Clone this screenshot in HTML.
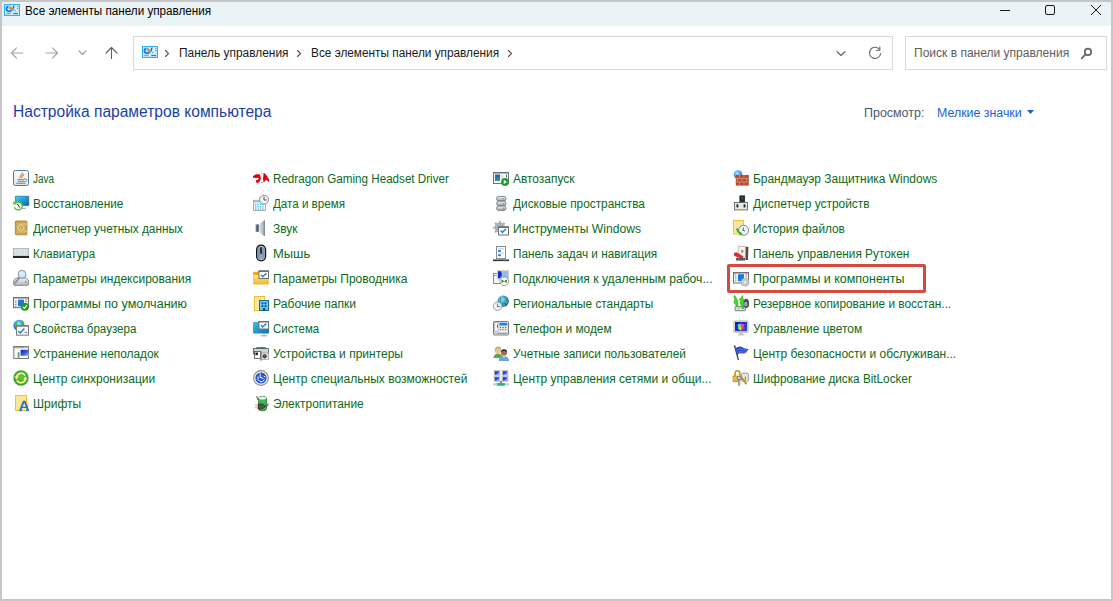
<!DOCTYPE html>
<html><head><meta charset="utf-8"><style>
html,body{margin:0;padding:0;}
body{width:1113px;height:601px;background:#c6c6c6;position:relative;overflow:hidden;font-family:"Liberation Sans",sans-serif;}
#win{position:absolute;left:2px;top:2px;width:1109px;height:597px;background:#fff;overflow:hidden;}
#titlebar{position:absolute;left:2px;top:2px;width:1109px;height:24px;background:#eaf3f6;}
.t{position:absolute;white-space:nowrap;font-size:12px;line-height:16px;transform-origin:0 0;}
.g{color:#0b6a1c;}
.abs{position:absolute;}
svg{position:absolute;overflow:visible;}
</style></head><body>
<div id="win"></div>
<div id="titlebar"></div>
<svg style="left:4px;top:4px" width="16" height="12" viewBox="0 0 16 12"><rect x="0.5" y="0.5" width="15" height="11" fill="#c4e8fa" stroke="#2ab2f2"/><path d="M4.4 2.4 A2.5 2.5 0 1 0 7.4 5.5" stroke="#1a78d8" stroke-width="1.8" fill="none"/><path d="M5.1 2 L5.1 5.1 L8.2 5.1 Q8 2.4 5.1 2 Z" fill="#f28a00"/><path d="M8.4 5.8 Q9 5.8 9.2 4 Q9.4 2.2 10.4 2.2" stroke="#1a4fb0" stroke-width="1.2" fill="none"/><rect x="11.2" y="2" width="2" height="1" fill="#fff"/><rect x="11.2" y="4" width="2" height="1" fill="#fff"/><rect x="11.4" y="6" width="2" height="1" fill="#fff"/><circle cx="13.7" cy="2.5" r="0.6" fill="#1a78d8"/><circle cx="13.7" cy="4.5" r="0.6" fill="#1a78d8"/><circle cx="11" cy="6.5" r="0.6" fill="#1a78d8"/><rect x="2" y="9.1" width="4.8" height="1" fill="#f28a00"/><rect x="7" y="9.1" width="1.6" height="1" fill="#fff"/><rect x="9.2" y="9.1" width="4.8" height="1" fill="#1a6fd0"/></svg>
<span class="t " style="left:24.73px;top:3.00px;transform:scaleX(0.9741);color:#000;">Все элементы панели управления</span>
<svg style="left:0;top:0" width="1113" height="30"><g stroke="#1a1a1a" stroke-width="1" fill="none"><line x1="1000" y1="10.5" x2="1010" y2="10.5"/><rect x="1045.5" y="5.5" width="9" height="9" rx="1.5"/><line x1="1091" y1="5" x2="1101" y2="15"/><line x1="1101" y1="5" x2="1091" y2="15"/></g></svg>
<svg style="left:0;top:0" width="140" height="70"><g fill="none" stroke-width="1.1" stroke-linecap="round" stroke-linejoin="round"><g stroke="#a3a3a3"><path d="M11.5 53 H22.5 M16.5 47.8 L11.5 53 L16.5 58.2"/><path d="M46 53 H57.5 M52.5 47.8 L57.5 53 L52.5 58.2"/></g><path stroke="#9a9a9a" d="M79 51 L82.5 54.5 L86 51"/><path stroke="#606060" d="M111.5 58.5 V47.5 M106 53 L111.5 47.5 L117 53"/></g></svg>
<div class="abs" style="left:133px;top:36px;width:758px;height:32px;border:1px solid #d9d9d9;"></div>
<svg style="left:142px;top:46px" width="16" height="12" viewBox="0 0 16 12"><rect x="0.5" y="0.5" width="15" height="11" fill="#c4e8fa" stroke="#2ab2f2"/><path d="M4.4 2.4 A2.5 2.5 0 1 0 7.4 5.5" stroke="#1a78d8" stroke-width="1.8" fill="none"/><path d="M5.1 2 L5.1 5.1 L8.2 5.1 Q8 2.4 5.1 2 Z" fill="#f28a00"/><path d="M8.4 5.8 Q9 5.8 9.2 4 Q9.4 2.2 10.4 2.2" stroke="#1a4fb0" stroke-width="1.2" fill="none"/><rect x="11.2" y="2" width="2" height="1" fill="#fff"/><rect x="11.2" y="4" width="2" height="1" fill="#fff"/><rect x="11.4" y="6" width="2" height="1" fill="#fff"/><circle cx="13.7" cy="2.5" r="0.6" fill="#1a78d8"/><circle cx="13.7" cy="4.5" r="0.6" fill="#1a78d8"/><circle cx="11" cy="6.5" r="0.6" fill="#1a78d8"/><rect x="2" y="9.1" width="4.8" height="1" fill="#f28a00"/><rect x="7" y="9.1" width="1.6" height="1" fill="#fff"/><rect x="9.2" y="9.1" width="4.8" height="1" fill="#1a6fd0"/></svg>
<svg style="left:0;top:0" width="900" height="70"><g fill="none" stroke="#555" stroke-width="1.1" stroke-linecap="round" stroke-linejoin="round"><path d="M165.5 50.5 L168.5 53.5 L165.5 56.5"/><path d="M297.5 50.5 L300.5 53.5 L297.5 56.5"/><path d="M508.5 50.5 L511.5 53.5 L508.5 56.5"/></g><g fill="none" stroke="#666" stroke-width="1.1" stroke-linecap="round" stroke-linejoin="round"><path d="M837 51.5 L841 55.5 L845 51.5"/><path d="M880.6 53.6 A5.6 5.6 0 1 1 879 48.9"/><path d="M876.3 50.3 H879.8 V46.8"/></g></svg>
<span class="t " style="left:178.88px;top:45.00px;transform:scaleX(0.9935);color:#1a1a1a;">Панель управления</span>
<span class="t " style="left:311.19px;top:45.00px;transform:scaleX(0.9841);color:#1a1a1a;">Все элементы панели управления</span>
<div class="abs" style="left:905px;top:36px;width:200px;height:32px;border:1px solid #d9d9d9;"></div>
<span class="t " style="left:914.18px;top:45.00px;transform:scaleX(1.0019);color:#5d5d5d;">Поиск в панели управления</span>
<svg style="left:0;top:0" width="1113" height="70"><g fill="none" stroke="#666" stroke-width="1.7" stroke-linecap="round"><circle cx="1088" cy="51.9" r="3.2"/><path d="M1085.6 54.4 L1081.6 58.4"/></g></svg>
<span class="t " style="left:13.30px;top:102.00px;transform:scaleX(0.9730);color:#1a3ea8;font-size:16px;line-height:20px;">Настройка параметров компьютера</span>
<span class="t " style="left:863.91px;top:105.00px;transform:scaleX(1.0382);color:#4e566b;">Просмотр:</span>
<span class="t " style="left:936.60px;top:105.00px;transform:scaleX(1.0308);color:#1a5fd6;">Мелкие значки</span>
<svg style="left:0;top:0" width="1113" height="130"><path d="M1027 110 H1034 L1030.5 114 Z" fill="#1a5fd6"/></svg>
<svg style="left:13px;top:170px" width="16" height="16" viewBox="0 0 16 16"><defs><linearGradient id="jg" x1="0" y1="0" x2="0" y2="1"><stop offset="0" stop-color="#fdfdfd"/><stop offset="1" stop-color="#e2e5e8"/></linearGradient></defs><rect x="0.5" y="0.5" width="15" height="15" rx="2" fill="url(#jg)" stroke="#56789a"/><path d="M7 8.2 C5.6 6.6 8.8 5.4 9.6 2.6 M8.6 8.2 C7.8 6.6 10.6 6 10.8 4" stroke="#ea7418" stroke-width="1.1" fill="none"/><path d="M4.3 9.6 H11.7 M5 11.4 H11 M3.2 13.3 H12.4" stroke="#5a7ca0" stroke-width="0.9" fill="none"/><path d="M11.6 8.6 Q14 9.2 13.6 10.6 Q13.2 11.8 11.2 11.8" stroke="#5a7ca0" stroke-width="0.9" fill="none"/></svg>
<span class="t g" style="left:32.93px;top:171.00px;transform:scaleX(0.8299);">Java</span>
<svg style="left:13px;top:195px" width="16" height="16" viewBox="0 0 16 16"><defs><linearGradient id="mg1" x1="0" y1="0" x2="1" y2="1"><stop offset="0" stop-color="#36d8f0"/><stop offset="1" stop-color="#0e62b4"/></linearGradient></defs><rect x="2.3" y="1.2" width="13.5" height="9.4" rx="0.6" fill="url(#mg1)" stroke="#17548c" stroke-width="0.6"/><path d="M9.3 13.3 H12.8" stroke="#8a949e" stroke-width="1"/><circle cx="5.2" cy="11" r="4" fill="#fff"/><path d="M2.6 8 A4 4 0 1 1 1.4 12.2" stroke="#52c032" stroke-width="1.4" fill="none"/><path d="M0.2 6 L0.4 9.8 L3.8 9.2 Z" fill="#52c032"/><path d="M4.2 8.8 L6.8 12.6" stroke="#222" stroke-width="1" fill="none"/></svg>
<span class="t g" style="left:33.19px;top:196.00px;transform:scaleX(0.9839);">Восстановление</span>
<svg style="left:13px;top:220px" width="16" height="16" viewBox="0 0 16 16"><rect x="2.3" y="1" width="11.6" height="13.8" rx="0.8" fill="#c7a045" stroke="#a4802c" stroke-width="0.8"/><rect x="3.8" y="2.6" width="8.6" height="10.6" fill="#d9b45a"/><circle cx="7.8" cy="7.6" r="2.6" fill="#b99448" stroke="#f0e0b8" stroke-width="1"/><circle cx="7.8" cy="7.6" r="0.9" fill="#e8dcc8"/><rect x="12.5" y="3.4" width="0.9" height="1.4" fill="#eee"/><rect x="12.5" y="10.4" width="0.9" height="1.4" fill="#eee"/></svg>
<span class="t g" style="left:33.28px;top:221.00px;transform:scaleX(0.9845);">Диспетчер учетных данных</span>
<svg style="left:13px;top:245px" width="16" height="16" viewBox="0 0 16 16"><rect x="0.3" y="3.3" width="15.4" height="9" fill="#c9d0d8" stroke="#9aa4ae" stroke-width="0.6"/><path d="M1.5 5 H14.5 M1.5 7 H14.5 M2 9 H14" stroke="#fff" stroke-width="1.1" stroke-dasharray="1.2 0.6"/><rect x="0" y="11" width="16" height="2" fill="#1d2328"/></svg>
<span class="t g" style="left:33.28px;top:246.00px;transform:scaleX(0.9540);">Клавиатура</span>
<svg style="left:13px;top:270px" width="16" height="16" viewBox="0 0 16 16"><defs><linearGradient id="dg" x1="0" y1="0" x2="0" y2="1"><stop offset="0" stop-color="#f2f2f4"/><stop offset="1" stop-color="#b4b7be"/></linearGradient></defs><path d="M1 10 L3 8 H13 L15.5 10 V14 Q15.5 15.4 14 15.4 H2 Q0.5 15.4 0.5 14 Z" fill="url(#dg)" stroke="#74777e" stroke-width="0.8"/><rect x="12.3" y="10.8" width="1.1" height="2.6" fill="#30c030"/><path d="M6.6 7.6 L1.6 13.4" stroke="#6a6d74" stroke-width="1.6"/><path d="M6.6 7.6 L1.6 13.4" stroke="#e8e8e8" stroke-width="0.5"/><circle cx="9" cy="4.3" r="3.9" fill="#d4eafa" stroke="#8a949e" stroke-width="1"/><path d="M7 3.5 Q8 2 10 2.4" stroke="#fff" stroke-width="0.8" fill="none"/></svg>
<span class="t g" style="left:32.59px;top:271.00px;transform:scaleX(0.9980);">Параметры индексирования</span>
<svg style="left:13px;top:295px" width="16" height="16" viewBox="0 0 16 16"><rect x="0.5" y="2.5" width="15" height="10.2" fill="#fdfdfd" stroke="#707070"/><rect x="0" y="2" width="16" height="1.5" fill="#707070"/><rect x="5" y="4.6" width="6" height="6.8" fill="#1a78d8"/><path d="M1.8 5.9 H3.6 M1.8 7.7 H3.6 M1.8 9.6 H3.6 M1.8 11.4 H3.6 M12.2 4.8 H14.2 M12.2 6.6 H14.2" stroke="#7a7a7a" stroke-width="0.9"/><circle cx="11.8" cy="11.8" r="4" fill="#23982a"/><path d="M9.8 11.8 L11.4 13.4 L14.0 10.200000000000001" stroke="#fff" stroke-width="1.2" fill="none"/></svg>
<span class="t g" style="left:33.07px;top:296.00px;transform:scaleX(1.0463);">Программы по умолчанию</span>
<svg style="left:13px;top:320px" width="16" height="16" viewBox="0 0 16 16"><defs><radialGradient id="gl1" cx="0.45" cy="0.35" r="0.7"><stop offset="0" stop-color="#a8f0ff"/><stop offset="0.55" stop-color="#2a8ee0"/><stop offset="1" stop-color="#1a4aa8"/></radialGradient></defs><circle cx="6" cy="5.4" r="5.6" fill="url(#gl1)"/><path d="M2.6 2 Q4.6 3.6 3.2 6.2 M8.6 0.8 Q11 2.4 9.6 4.6" stroke="#3cc040" stroke-width="1.6" fill="none"/><rect x="3.5" y="5.7" width="12" height="9.5" fill="#f6f6f6" stroke="#7c7c7c"/><rect x="3" y="5.2" width="13" height="1.5" fill="#7c7c7c"/><path d="M5.2 11.2 L7.3 13 L11.3 8.5" stroke="#1f80d8" stroke-width="1.5" fill="none"/><path d="M11.8 12.6 H14" stroke="#666" stroke-width="0.9"/></svg>
<span class="t g" style="left:32.78px;top:321.00px;transform:scaleX(0.9611);">Свойства браузера</span>
<svg style="left:13px;top:345px" width="16" height="16" viewBox="0 0 16 16"><rect x="0.8" y="1.6" width="14.7" height="11.9" fill="#fbfbfb" stroke="#787878"/><rect x="0.3" y="1.1" width="15.7" height="1.5" fill="#787878"/><path d="M11 2.2 H15" stroke="#eee" stroke-width="0.6" stroke-dasharray="1 0.5"/><defs><linearGradient id="tb" x1="0" y1="0" x2="1" y2="1"><stop offset="0" stop-color="#0a1ac0"/><stop offset="0.6" stop-color="#3a6ae8"/><stop offset="1" stop-color="#a8c8f8"/></linearGradient></defs><rect x="7.6" y="4.8" width="8" height="6" fill="url(#tb)"/><rect x="4.7" y="7.4" width="1.8" height="5.4" fill="#8a8a8a"/><rect x="4.7" y="7.6" width="1.8" height="1.6" fill="#40d040"/><rect x="2" y="3.4" width="11" height="0.7" fill="#d0d0d0"/></svg>
<span class="t g" style="left:32.78px;top:346.00px;transform:scaleX(0.9894);">Устранение неполадок</span>
<svg style="left:13px;top:370px" width="16" height="16" viewBox="0 0 16 16"><defs><radialGradient id="sc" cx="0.5" cy="0.45" r="0.6"><stop offset="0" stop-color="#6ac848"/><stop offset="1" stop-color="#2a9a2e"/></radialGradient></defs><circle cx="8" cy="8" r="7.7" fill="url(#sc)"/><path d="M3.6 7.2 A4.6 4.6 0 0 1 12.2 5.6" stroke="#f4f08a" stroke-width="1.8" fill="none"/><path d="M12.4 8.8 A4.6 4.6 0 0 1 3.8 10.4" stroke="#f4f08a" stroke-width="1.8" fill="none"/><path d="M1.4 6.6 L5.8 6.6 L3.6 9.8 Z M14.6 9.4 L10.2 9.4 L12.4 6.2 Z" fill="#f4f08a"/></svg>
<span class="t g" style="left:32.56px;top:371.00px;transform:scaleX(1.0001);">Центр синхронизации</span>
<svg style="left:13px;top:395px" width="16" height="16" viewBox="0 0 16 16"><rect x="2.5" y="0.5" width="11" height="15" fill="#fde49c" stroke="#f2c232"/><rect x="13" y="8" width="2" height="4" fill="#fde49c" stroke="#f2c232" stroke-width="0.6"/><path d="M7.2 15.4 L10.6 6.6 H11.8 L15.2 15.4" stroke="#1a6fd0" stroke-width="1.8" fill="none"/><path d="M8.6 12.4 H13.6" stroke="#1a6fd0" stroke-width="1.2"/><path d="M6 15.6 H9.4 M13 15.6 H16" stroke="#1a6fd0" stroke-width="1"/></svg>
<span class="t g" style="left:33.18px;top:396.00px;transform:scaleX(1.0014);">Шрифты</span>
<svg style="left:253px;top:170px" width="16" height="16" viewBox="0 0 16 16"><path d="M0 6.1 L2 4.9 L3.3 4 L4.4 4.7 L5.7 4 L7 4.7 L7.6 6.7 L7.9 8.8 L6.8 11.2 L5.5 12.8 L3.1 12.8 L3.1 10.1 L4.4 9.9 L6 8.5 L4.7 7.7 L3.3 8 L0.1 7.7 Z" fill="#e2000f"/><path d="M10.3 3.2 L11.8 3.2 L14 5.9 L15 8 L16 9.1 L16 11.7 L15 11.7 L14 10.1 L12.9 10.1 L11.6 11.7 L10.3 11.7 L10 8 L10.5 5.3 Z" fill="#e2000f"/><rect x="8.1" y="12.2" width="1.6" height="0.7" fill="#e2000f"/><circle cx="8.4" cy="3.4" r="0.6" fill="#f2a0a8"/></svg>
<span class="t g" style="left:273.20px;top:171.00px;transform:scaleX(0.9693);">Redragon Gaming Headset Driver</span>
<svg style="left:253px;top:195px" width="16" height="16" viewBox="0 0 16 16"><rect x="0.5" y="5.3" width="11.8" height="10.2" fill="#f8fbfc" stroke="#8e9aa2" stroke-width="0.8"/><rect x="0.9" y="5.7" width="11" height="1.8" fill="#8ad0e2"/><rect x="2.0" y="8.9" width="1.3" height="1.3" fill="#3aaed0"/><rect x="4.4" y="8.9" width="1.3" height="1.3" fill="#3aaed0"/><rect x="6.8" y="8.9" width="1.3" height="1.3" fill="#3aaed0"/><rect x="9.2" y="8.9" width="1.3" height="1.3" fill="#3aaed0"/><rect x="2.0" y="11.2" width="1.3" height="1.3" fill="#3aaed0"/><rect x="4.4" y="11.2" width="1.3" height="1.3" fill="#3aaed0"/><rect x="6.8" y="11.2" width="1.3" height="1.3" fill="#3aaed0"/><rect x="9.2" y="11.2" width="1.3" height="1.3" fill="#3aaed0"/><rect x="2.0" y="13.4" width="1.3" height="1.3" fill="#3aaed0"/><rect x="4.4" y="13.4" width="1.3" height="1.3" fill="#3aaed0"/><rect x="6.8" y="13.4" width="1.3" height="1.3" fill="#3aaed0"/><rect x="9.2" y="13.4" width="1.3" height="1.3" fill="#3aaed0"/><circle cx="11" cy="4.7" r="4.5" fill="#eef2f4" stroke="#7d8890" stroke-width="0.9"/><path d="M11 1.6 V5 H13.6" stroke="#34404c" stroke-width="0.9" fill="none"/></svg>
<span class="t g" style="left:273.28px;top:196.00px;transform:scaleX(0.9664);">Дата и время</span>
<svg style="left:253px;top:220px" width="16" height="16" viewBox="0 0 16 16"><defs><linearGradient id="spk" x1="0" y1="0" x2="1" y2="0"><stop offset="0" stop-color="#e6e8ea"/><stop offset="0.6" stop-color="#b8bcc0"/><stop offset="1" stop-color="#7d838a"/></linearGradient><linearGradient id="spr" x1="0" y1="0" x2="1" y2="0"><stop offset="0" stop-color="#8a96a2"/><stop offset="0.5" stop-color="#4e5a66"/><stop offset="1" stop-color="#7a8692"/></linearGradient></defs><rect x="2.6" y="4.4" width="3.4" height="7.4" fill="url(#spr)"/><path d="M6 4.4 L11 0.2 H12 V16 H11 L6 11.8 Z" fill="url(#spk)"/></svg>
<span class="t g" style="left:272.67px;top:221.00px;transform:scaleX(0.9958);">Звук</span>
<svg style="left:253px;top:245px" width="16" height="16" viewBox="0 0 16 16"><defs><linearGradient id="ms" x1="0" y1="0" x2="1" y2="0"><stop offset="0" stop-color="#5d748c"/><stop offset="0.5" stop-color="#9cb0c4"/><stop offset="1" stop-color="#60788e"/></linearGradient></defs><rect x="3.6" y="0.2" width="9" height="15.6" rx="4.5" fill="url(#ms)" stroke="#0c0f12" stroke-width="1.2"/><rect x="4.6" y="1.2" width="7" height="13.6" rx="3.5" fill="none" stroke="#dfe6ec" stroke-width="0.5" opacity="0.7"/><rect x="7.1" y="2.3" width="1.9" height="6.5" fill="#26292e"/></svg>
<span class="t g" style="left:272.94px;top:246.00px;transform:scaleX(1.0774);">Мышь</span>
<svg style="left:253px;top:270px" width="16" height="16" viewBox="0 0 16 16"><defs><linearGradient id="fo" x1="0" y1="0" x2="0" y2="1"><stop offset="0" stop-color="#ffe48a"/><stop offset="1" stop-color="#f2b62a"/></linearGradient></defs><path d="M0 3.4 Q0 1.8 1.6 1.8 H6.4 L7.2 3.6 H14 V6 H0 Z" fill="#f0a808"/><rect x="0" y="4.8" width="16" height="9.8" rx="1" fill="url(#fo)"/><rect x="6.0" y="1.0" width="9.5" height="7.5" fill="#fff" stroke="#6e6e6e"/><rect x="5.5" y="0.5" width="10.5" height="1.5" fill="#6e6e6e"/><path d="M8 5 L9.7 6.8 L13.4 3.4" stroke="#1f86e0" stroke-width="1.5" fill="none"/></svg>
<span class="t g" style="left:273.18px;top:271.00px;transform:scaleX(0.9996);">Параметры Проводника</span>
<svg style="left:253px;top:295px" width="16" height="16" viewBox="0 0 16 16"><rect x="1.5" y="1.5" width="10" height="14" fill="#fde59e" stroke="#f0c030"/><rect x="6.5" y="5.5" width="9" height="10" fill="#66cdf3" stroke="#1a6aa0"/><rect x="8.6" y="7.4" width="1.8" height="1.8" fill="#144a72"/><rect x="11.6" y="7.4" width="1.8" height="1.8" fill="#144a72"/><rect x="8.6" y="10.2" width="1.8" height="1.8" fill="#144a72"/><rect x="11.6" y="10.2" width="1.8" height="1.8" fill="#144a72"/><rect x="9.8" y="13" width="2.6" height="2.6" fill="#144a72"/></svg>
<span class="t g" style="left:273.11px;top:296.00px;transform:scaleX(1.0123);">Рабочие папки</span>
<svg style="left:253px;top:320px" width="16" height="16" viewBox="0 0 16 16"><defs><linearGradient id="sy" x1="0" y1="0" x2="1" y2="1"><stop offset="0" stop-color="#37c4e8"/><stop offset="1" stop-color="#0b6cb4"/></linearGradient></defs><rect x="0" y="2" width="16" height="11.5" rx="1" fill="url(#sy)"/><path d="M11 13.5 V15.5 M7.5 15.8 H14" stroke="#9aa6b0" stroke-width="1"/><rect x="6.0" y="1.5" width="9.5" height="7.5" fill="#fff" stroke="#6e6e6e"/><rect x="5.5" y="1" width="10.5" height="1.5" fill="#6e6e6e"/><path d="M8 5.2 L9.6 7 L13.3 3.6" stroke="#1f86e0" stroke-width="1.5" fill="none"/></svg>
<span class="t g" style="left:272.77px;top:321.00px;transform:scaleX(0.9551);">Система</span>
<svg style="left:253px;top:345px" width="16" height="16" viewBox="0 0 16 16"><rect x="3" y="2" width="10" height="2.5" rx="1" fill="#2a8ae8"/><rect x="7" y="2" width="2" height="2.5" fill="#28b048"/><rect x="0.5" y="3.5" width="15" height="5.5" fill="#d0d3d6" stroke="#444" stroke-width="0.7"/><rect x="1.5" y="6.5" width="6" height="7" fill="#fff" stroke="#333" stroke-width="0.7"/><rect x="2.4" y="7.5" width="2.6" height="2.6" fill="#222"/><rect x="7.2" y="6.5" width="1.6" height="9" fill="#707070"/><rect x="8.5" y="8" width="7" height="6.5" fill="#e2e4e6" stroke="#9a9ea4" stroke-width="0.7"/><circle cx="11.6" cy="11.3" r="2" fill="#333" stroke="#777" stroke-width="0.5"/><circle cx="11.3" cy="11" r="0.7" fill="#48a0c0"/></svg>
<span class="t g" style="left:272.79px;top:346.00px;transform:scaleX(0.9998);">Устройства и принтеры</span>
<svg style="left:253px;top:370px" width="16" height="16" viewBox="0 0 16 16"><circle cx="8" cy="8" r="7.4" fill="#f2f2f2" stroke="#8c8c8c" stroke-width="1.1"/><circle cx="8" cy="8" r="5.6" fill="#2656c8"/><path d="M7.2 3.5 V7.4 L10.5 8.6 M5 6.5 Q4 10 7 11.6 Q10 12.6 11.5 9.5 M10.8 6.3 L12.3 7" stroke="#fff" stroke-width="1" fill="none"/></svg>
<span class="t g" style="left:273.12px;top:371.00px;transform:scaleX(1.0016);">Центр специальных возможностей</span>
<svg style="left:253px;top:395px" width="16" height="16" viewBox="0 0 16 16"><path d="M5.5 3.5 Q5.5 1.3 9.5 1.3 Q13.5 1.3 13.5 3.5 V14 Q13.5 15.8 9.5 15.8 Q5.5 15.8 5.5 14 Z" fill="#3cb84a" stroke="#1e6e2a" stroke-width="0.7"/><ellipse cx="9.5" cy="3" rx="3.6" ry="1.5" fill="#f0f4f0"/><path d="M15 8.5 Q16 11 12 11.5" stroke="#222" stroke-width="0.8" fill="none"/><path d="M4 1 Q3.5 3 5.2 5" stroke="#333" stroke-width="0.8" fill="none"/><path d="M5 9 H9 L11.5 10.5 V12.5 L9 14 H5 Z" fill="#505458" stroke="#222" stroke-width="0.6"/><rect x="2" y="9.6" width="3" height="1.1" fill="#e8b820"/><rect x="2" y="12.2" width="3" height="1.1" fill="#e8b820"/></svg>
<span class="t g" style="left:273.07px;top:396.00px;transform:scaleX(0.9928);">Электропитание</span>
<svg style="left:493px;top:170px" width="16" height="16" viewBox="0 0 16 16"><rect x="0.5" y="2.5" width="15" height="11" fill="#fcfcfc" stroke="#747474"/><rect x="0" y="2" width="16" height="1.5" fill="#747474"/><defs><linearGradient id="az" x1="0" y1="0" x2="0" y2="1"><stop offset="0" stop-color="#1a5cb0"/><stop offset="1" stop-color="#3a9a8a"/></linearGradient></defs><rect x="2" y="4.5" width="5" height="6.5" fill="url(#az)"/><path d="M8.3 6 H10.5 M8.3 8 H10" stroke="#aaa" stroke-width="0.8"/><rect x="13" y="4.5" width="1" height="3" fill="#2a6ac0"/><circle cx="12" cy="12" r="3.9" fill="#2a9a30"/><path d="M10.8 10 L14 12 L10.8 14 Z" fill="#fff"/></svg>
<span class="t g" style="left:513.00px;top:171.00px;transform:scaleX(0.9931);">Автозапуск</span>
<svg style="left:493px;top:195px" width="16" height="16" viewBox="0 0 16 16"><defs><linearGradient id="dsk" x1="0" y1="0" x2="0" y2="1"><stop offset="0" stop-color="#f4f4f6"/><stop offset="1" stop-color="#9ea2a8"/></linearGradient></defs><rect x="3.6" y="1.4" width="9.4" height="4.4" rx="2" fill="url(#dsk)" stroke="#6a6e74" stroke-width="0.8"/><rect x="3.6" y="6.2" width="9.4" height="4.4" rx="2" fill="url(#dsk)" stroke="#6a6e74" stroke-width="0.8"/><rect x="3.6" y="11" width="9.4" height="4.4" rx="2" fill="url(#dsk)" stroke="#6a6e74" stroke-width="0.8"/><rect x="9.8" y="3.2" width="1.2" height="1" fill="#2ad02a"/><rect x="9.8" y="8" width="1.2" height="1" fill="#2ad02a"/><rect x="9.8" y="12.8" width="1.2" height="1" fill="#2ad02a"/></svg>
<span class="t g" style="left:513.28px;top:196.00px;transform:scaleX(0.9872);">Дисковые пространства</span>
<svg style="left:493px;top:220px" width="16" height="16" viewBox="0 0 16 16"><path d="M6 0.8 L7.6 0.8 L8 2.6 L9.6 3.3 L11 2.2 L12.2 3.4 L11.2 4.9 L11.8 6.4 L13.5 6.8 V8.4 L11.8 8.8 L11.2 10.3 L12.2 11.7 L11 12.9 L9.6 11.9 L8 12.6 L7.6 14.3 H6 L5.6 12.6 L4 11.9 L2.6 12.9 L1.4 11.7 L2.4 10.3 L1.8 8.8 L0.1 8.4 V6.8 L1.8 6.4 L2.4 4.9 L1.4 3.4 L2.6 2.2 L4 3.3 L5.6 2.6 Z" fill="#a7b1bc"/><rect x="5.5" y="7.0" width="10" height="8.0" fill="#fff" stroke="#6e6e6e"/><rect x="5" y="6.5" width="11" height="1.5" fill="#6e6e6e"/><path d="M7.6 10.6 L9.3 12.4 L13 9" stroke="#1f86e0" stroke-width="1.5" fill="none"/></svg>
<span class="t g" style="left:513.11px;top:221.00px;transform:scaleX(1.0089);">Инструменты Windows</span>
<svg style="left:493px;top:245px" width="16" height="16" viewBox="0 0 16 16"><rect x="3.5" y="1.5" width="9" height="12" fill="#fff" stroke="#8a8a8a"/><path d="M5 3.8 H11 M5 8 H11" stroke="#bbb" stroke-width="0.8"/><rect x="5" y="5" width="3" height="1.8" fill="#1a82e0"/><rect x="5" y="9.4" width="3" height="1.8" fill="#1a82e0"/><rect x="0" y="14.5" width="16" height="1.6" fill="#2a2e33"/><path d="M10 15.3 H16" stroke="#888" stroke-width="0.6" stroke-dasharray="0.6 0.6"/></svg>
<span class="t g" style="left:513.19px;top:246.00px;transform:scaleX(0.9795);">Панель задач и навигация</span>
<svg style="left:493px;top:270px" width="16" height="16" viewBox="0 0 16 16"><rect x="0.5" y="3.5" width="7" height="10" fill="#f8f8f8" stroke="#8a8a8a"/><rect x="1" y="5" width="6" height="0.8" fill="#7a9ad0"/><rect x="4" y="0" width="12" height="9.5" fill="#d8d4cc"/><rect x="5" y="1.3" width="10" height="7" fill="#98b8f0"/><path d="M5 1.3 H8 L9 5 L7 8.3 H5 Z" fill="#1030c0"/><circle cx="11.2" cy="11.3" r="4.4" fill="#fff" stroke="#8a8a8a" stroke-width="0.8"/><path d="M8.4 10 L10.2 11.3 L8.4 12.6 M14 10 L12.2 11.3 L14 12.6" stroke="#1a8a1a" stroke-width="1.2" fill="none"/></svg>
<span class="t g" style="left:513.13px;top:271.00px;transform:scaleX(1.0123);">Подключения к удаленным рабоч...</span>
<svg style="left:493px;top:295px" width="16" height="16" viewBox="0 0 16 16"><defs><radialGradient id="gl2" cx="0.4" cy="0.35" r="0.7"><stop offset="0" stop-color="#9ee8ff"/><stop offset="0.6" stop-color="#2a86d8"/><stop offset="1" stop-color="#1a3fa8"/></radialGradient></defs><circle cx="10.2" cy="6.2" r="5.6" fill="url(#gl2)"/><path d="M7 2.8 Q8.5 4.5 7.5 6.5 M12.5 5 Q14.5 6 13.5 8.5 M9.5 9.5 Q11 10.5 12.5 10.2" stroke="#38c040" stroke-width="1.5" fill="none"/><circle cx="4.6" cy="11.2" r="4.3" fill="#eef2f4" stroke="#8d979e" stroke-width="0.9"/><path d="M4.6 8.6 V11.6 H7" stroke="#5a6a78" stroke-width="0.9" fill="none"/></svg>
<span class="t g" style="left:513.19px;top:296.00px;transform:scaleX(0.9841);">Региональные стандарты</span>
<svg style="left:493px;top:320px" width="16" height="16" viewBox="0 0 16 16"><rect x="0.5" y="1.5" width="15" height="13.5" rx="1" fill="#e4e6ea" stroke="#6a6e74" stroke-width="0.9"/><rect x="1.5" y="2.5" width="3.5" height="9" fill="#fafafa" stroke="#888" stroke-width="0.5"/><rect x="4" y="5" width="0.6" height="2.5" fill="#222"/><rect x="6.3" y="2.8" width="8" height="2.6" rx="0.6" fill="#1a84e0"/><path d="M6.8 7.5 H14 M6.8 9.6 H14" stroke="#555" stroke-width="0.9" stroke-dasharray="1.2 1.4"/><rect x="1" y="12.6" width="14" height="1.8" fill="#bcc0c6"/><path d="M5 13.5 H13" stroke="#1a84e0" stroke-width="1" stroke-dasharray="0.9 0.9"/></svg>
<span class="t g" style="left:513.23px;top:321.00px;transform:scaleX(0.9889);">Телефон и модем</span>
<svg style="left:493px;top:345px" width="16" height="16" viewBox="0 0 16 16"><path d="M0.4 13 Q0.6 9.2 5 8.6 Q9.4 9.2 9.6 13 Z" fill="#5aa848"/><circle cx="5" cy="5.6" r="3.2" fill="#e8c49a"/><path d="M1.8 5.6 Q1.8 1.6 5 1.6 Q8.4 1.6 8.4 5 Q7 3.4 4 3.6 Q3 5 2.5 7 Z" fill="#c8b070"/><path d="M5.8 16 Q6 11.6 11 11 Q15.8 11.6 16 16 Z" fill="#6aa4d8"/><path d="M10 11.4 L11 13 L12 11.4 Z" fill="#fff"/><circle cx="11" cy="7.8" r="3" fill="#a86e44"/><path d="M8 7.5 Q8 4.2 11 4.2 Q14 4.2 14 7.5 Q13 5.8 11 6 Q9 5.8 8 7.5 Z" fill="#2a2a2a"/></svg>
<span class="t g" style="left:512.78px;top:346.00px;transform:scaleX(0.9872);">Учетные записи пользователей</span>
<svg style="left:493px;top:370px" width="16" height="16" viewBox="0 0 16 16"><defs><linearGradient id="nm" x1="0" y1="0" x2="1" y2="1"><stop offset="0" stop-color="#0a1ab8"/><stop offset="0.5" stop-color="#2a4ae8"/><stop offset="1" stop-color="#b8d0ff"/></linearGradient></defs><rect x="1" y="0.5" width="6" height="5" fill="#c4c8cc" stroke="#9ca2a8" stroke-width="0.4"/><rect x="1.9" y="1.3" width="4.2" height="3.4" fill="url(#nm)"/><rect x="9" y="0.5" width="6" height="5" fill="#c4c8cc" stroke="#9ca2a8" stroke-width="0.4"/><rect x="9.9" y="1.3" width="4.2" height="3.4" fill="url(#nm)"/><rect x="1" y="6.5" width="6" height="5" fill="#c4c8cc" stroke="#9ca2a8" stroke-width="0.4"/><rect x="1.9" y="7.3" width="4.2" height="3.4" fill="url(#nm)"/><rect x="9" y="6.5" width="6" height="5" fill="#c4c8cc" stroke="#9ca2a8" stroke-width="0.4"/><rect x="9.9" y="7.3" width="4.2" height="3.4" fill="url(#nm)"/><rect x="0" y="13.2" width="16" height="2.2" fill="#c8ccd0"/><path d="M7 11 H9 V13 H11.8 V15.8 H4.2 V13 H7 Z" fill="#1ec070"/></svg>
<span class="t g" style="left:513.15px;top:371.00px;transform:scaleX(0.9966);">Центр управления сетями и общи...</span>
<svg style="left:733px;top:170px" width="16" height="16" viewBox="0 0 16 16"><defs><radialGradient id="fg" cx="0.4" cy="0.35" r="0.7"><stop offset="0" stop-color="#b0e4fa"/><stop offset="0.7" stop-color="#3c8ad0"/><stop offset="1" stop-color="#2a6ab8"/></radialGradient></defs><circle cx="5" cy="4.6" r="4.3" fill="url(#fg)"/><rect x="2.8" y="5" width="13" height="10.6" fill="#b9492e"/><path d="M2.8 8.5 H15.8 M2.8 12 H15.8 M6.5 5 V8.5 M11 5 V8.5 M4.5 8.5 V12 M9 8.5 V12 M13.5 8.5 V12 M6.5 12 V15.6 M11 12 V15.6" stroke="#e2aa92" stroke-width="0.6"/></svg>
<span class="t g" style="left:753.18px;top:171.00px;transform:scaleX(0.9950);">Брандмауэр Защитника Windows</span>
<svg style="left:733px;top:195px" width="16" height="16" viewBox="0 0 16 16"><rect x="6.8" y="0.8" width="5" height="6.8" fill="#2a2e33" stroke="#111" stroke-width="0.5"/><rect x="8.8" y="2.5" width="1" height="1" fill="#30e040"/><rect x="1.5" y="7.5" width="13" height="7.4" fill="#e6e8ea" stroke="#666" stroke-width="0.9"/><rect x="3.5" y="9.4" width="1.8" height="3" fill="#1a1a1a"/><rect x="10.6" y="9.4" width="1.8" height="3" fill="#1a1a1a"/></svg>
<span class="t g" style="left:753.28px;top:196.00px;transform:scaleX(0.9941);">Диспетчер устройств</span>
<svg style="left:733px;top:220px" width="16" height="16" viewBox="0 0 16 16"><rect x="0.5" y="0.5" width="10" height="13.5" fill="#fde59e" stroke="#f0c030"/><circle cx="10.6" cy="10.3" r="5" fill="#f2f4f6" stroke="#7a848c" stroke-width="1"/><path d="M10.6 7.5 L9.8 10.3 L12 11" stroke="#333" stroke-width="0.8" fill="none"/><path d="M3 8.5 Q3.5 12.5 7 13.8 L5.6 15 L9.6 15.2 L8 11.8 L7.6 12.6 Q5 11 5.2 8.5 Z" fill="#2ab02a"/></svg>
<span class="t g" style="left:753.19px;top:221.00px;transform:scaleX(0.9846);">История файлов</span>
<svg style="left:733px;top:245px" width="16" height="16" viewBox="0 0 16 16"><rect x="5" y="1.5" width="10" height="12" fill="#f4f4f4" stroke="#9a9a9a" stroke-width="0.6" transform="rotate(5 10 8)"/><rect x="12.5" y="2" width="2.5" height="13" fill="#5a4a4a"/><rect x="8" y="5" width="2.4" height="2.6" fill="#d08a30"/><path d="M0.8 9 Q1.5 6.5 4 7.5 L10.5 11.5 L9.5 13.8 L2.5 11.6 Q0.5 10.8 0.8 9 Z" fill="#e02a3a"/><rect x="3" y="13" width="9" height="2.6" fill="#3a3a3a" opacity="0.8"/></svg>
<span class="t g" style="left:753.19px;top:246.00px;transform:scaleX(0.9871);">Панель управления Рутокен</span>
<svg style="left:733px;top:270px" width="16" height="16" viewBox="0 0 16 16"><rect x="0.5" y="2.5" width="15" height="10.5" fill="#fdfdfd" stroke="#707070"/><rect x="0" y="2" width="16" height="1.5" fill="#707070"/><rect x="5" y="4.2" width="6" height="7" fill="#1a78d8"/><path d="M1.8 4.8 H3.4 M1.8 6.8 H3.4 M1.8 8.8 H3.4 M1.8 10.8 H3.4 M12.4 4.8 H14.2 M12.4 6.8 H14.2" stroke="#777" stroke-width="0.9"/><circle cx="12" cy="12.2" r="4" fill="#c8ccd0" stroke="#9aa0a6" stroke-width="0.6"/><circle cx="12" cy="12.2" r="1" fill="#fff"/></svg>
<span class="t g" style="left:753.08px;top:271.00px;transform:scaleX(1.0388);">Программы и компоненты</span>
<svg style="left:733px;top:295px" width="16" height="16" viewBox="0 0 16 16"><path d="M2.2 11.6 H11.8 Q12.4 11.6 12.4 12.4 V15 Q12.4 15.7 11.6 15.7 H2.6 Q2 15.7 2 15 V12.4 Q2 11.6 2.2 11.6 Z" fill="#e4e6ea" stroke="#5a5e66" stroke-width="0.8"/><rect x="4.5" y="13.2" width="2.2" height="0.8" fill="#8a8e96"/><ellipse cx="13.2" cy="8.4" rx="2.8" ry="4.6" fill="#4a4a52"/><ellipse cx="12.8" cy="9" rx="1.6" ry="2.6" fill="#a0a8d8"/><path d="M12 9.6 L14.4 10.4" stroke="#f08050" stroke-width="1"/><path d="M1.3 0.4 Q3 1.4 3.6 4 Q5.6 5.4 4.8 7.6 Q5.6 9.6 4.4 11.4 L3.2 11.6 Q3.4 9.4 1.6 8.6 Q0.2 7.4 1.4 6 Q2.2 4.6 1.2 3 Q0.8 1.6 1.3 0.4 Z" fill="#3ee01c" stroke="#1a8a10" stroke-width="0.5"/><path d="M9.6 0.4 Q10.4 2.4 9.6 3.6 Q11.4 4.6 11.2 6 Q10 6.4 10.2 8.6 Q10.8 11.4 10.6 13.4 L8.8 13.6 Q9 11 7.6 9 Q6.4 7.6 7.6 6 Q6 5.2 6.6 3.8 Q8.6 3.4 9.6 0.4 Z" fill="#3ee01c" stroke="#1a8a10" stroke-width="0.5"/></svg>
<span class="t g" style="left:753.19px;top:296.00px;transform:scaleX(0.9873);">Резервное копирование и восстан...</span>
<svg style="left:733px;top:320px" width="16" height="16" viewBox="0 0 16 16"><rect x="0.8" y="0.8" width="14.4" height="11.6" rx="0.8" fill="#e2ded2" stroke="#b0aa9c" stroke-width="0.6"/><defs><linearGradient id="scr" x1="0" y1="0" x2="1" y2="1"><stop offset="0" stop-color="#0a18b8"/><stop offset="1" stop-color="#3050e0"/></linearGradient><linearGradient id="cl" x1="0" y1="0" x2="0.6" y2="1"><stop offset="0" stop-color="#40f0f0"/><stop offset="0.5" stop-color="#60f060"/><stop offset="1" stop-color="#ffff40"/></linearGradient><linearGradient id="cr" x1="0" y1="0" x2="0" y2="1"><stop offset="0" stop-color="#ff40c0"/><stop offset="1" stop-color="#ff3040"/></linearGradient></defs><rect x="2" y="2" width="12" height="9.2" fill="url(#scr)"/><path d="M4.6 4.4 L7.6 3.6 L8.2 10.4 L5.4 9 Z" fill="url(#cl)"/><path d="M7.6 3.6 L11.4 4.2 L11 8.6 L8.2 10.4 Z" fill="url(#cr)"/><path d="M7.6 3.6 L8.2 10.4" stroke="#fff" stroke-width="0.3" opacity="0.6"/><rect x="6" y="12.4" width="4" height="1.4" fill="#bdb8ac"/><path d="M4.4 15.4 Q4.6 13.8 8 13.8 Q11.4 13.8 11.6 15.4 Z" fill="#c8c4b8"/></svg>
<span class="t g" style="left:752.78px;top:321.00px;transform:scaleX(0.9946);">Управление цветом</span>
<svg style="left:733px;top:345px" width="16" height="16" viewBox="0 0 16 16"><path d="M1.6 1.2 L5.4 15" stroke="#44464e" stroke-width="1.3"/><circle cx="1.7" cy="1.3" r="1" fill="#55585e"/><path d="M2.6 3 Q5 1.2 7.4 1.4 Q9.6 1.8 11 3.2 Q13.4 4 15.8 4 Q14 6 13 7.8 Q11.4 8.8 9.8 8.4 Q7.4 8 6 8.6 Q4.8 9.4 4.4 10.4 Z" fill="#2c4ad2"/><path d="M4 5 Q6.5 3.4 9.5 4.6 Q12 5.6 14 5.2 M4.6 7.6 Q7 6 10 7 Q12 7.4 13 6.8" stroke="#8aa0f0" stroke-width="0.5" fill="none"/></svg>
<span class="t g" style="left:753.15px;top:346.00px;transform:scaleX(0.9972);">Центр безопасности и обслуживан...</span>
<svg style="left:733px;top:370px" width="16" height="16" viewBox="0 0 16 16"><rect x="8.2" y="3.2" width="7.4" height="7.8" rx="1.6" fill="#e4e4e8" stroke="#8a8a90" stroke-width="0.8"/><rect x="11.8" y="6.6" width="1.2" height="3.2" fill="#28d028"/><path d="M2 6.4 V4 Q2 0.8 4.5 0.8 Q7 0.8 7 4 V6.4" stroke="#c8961c" stroke-width="1.6" fill="none"/><rect x="0" y="6" width="5.6" height="5.8" fill="#e4b22a" stroke="#a07410" stroke-width="0.5"/><path d="M0.3 7.6 H5.3 M0.3 9.4 H5.3" stroke="#f8d870" stroke-width="0.6"/><path d="M7.4 6.4 L13.6 14.2" stroke="#b8881a" stroke-width="2"/><path d="M7.4 6.4 L13.6 14.2" stroke="#f0c850" stroke-width="0.7" stroke-dasharray="0.8 0.6"/><circle cx="6.1" cy="8.1" r="1.9" fill="#d0d4d8" stroke="#555a60" stroke-width="0.6"/><rect x="5.4" y="9.6" width="1.6" height="5.6" fill="#c4c8cc" stroke="#555a60" stroke-width="0.45"/></svg>
<span class="t g" style="left:753.20px;top:371.00px;transform:scaleX(0.9777);">Шифрование диска BitLocker</span>
<div class="abs" style="left:727px;top:264px;width:193px;height:22.5px;border:3px solid #d24b3e;border-radius:2px;"></div>
</body></html>
